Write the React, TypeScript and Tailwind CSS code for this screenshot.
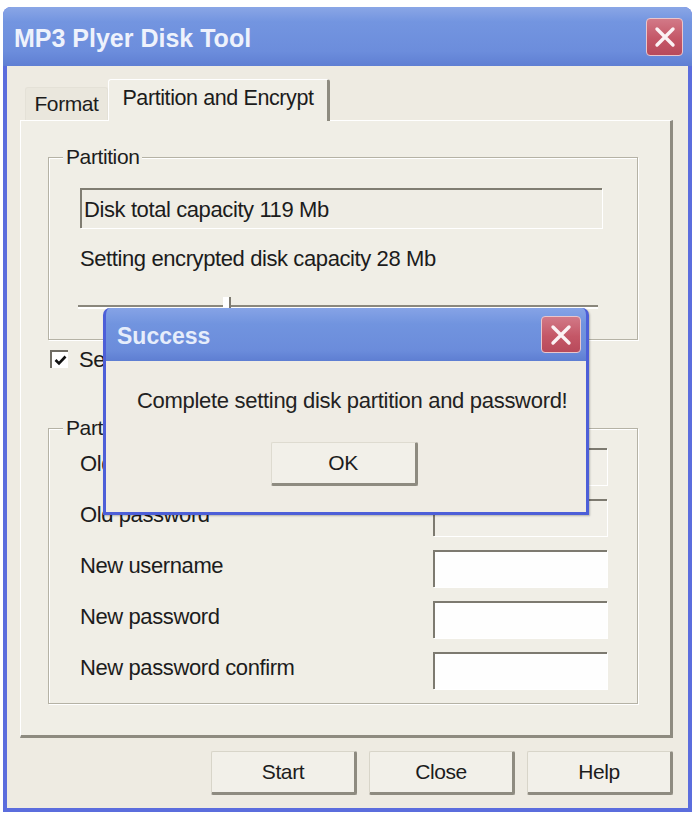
import React from "react";

const font = "font-['Liberation_Sans',Arial,sans-serif]";

const CloseBox = ({ className }: { className: string }) => (
  <div
    className={`flex items-center justify-center rounded-[4px] border border-[#e9c6cc] bg-[linear-gradient(180deg,#d27987_0%,#c45767_55%,#b84a5b_100%)] ${className}`}
  >
    <svg width="22" height="22" viewBox="0 0 22 22">
      <path d="M3 3 L19 19 M19 3 L3 19" stroke="#fbf2f4" strokeWidth="3.4" strokeLinecap="round" />
    </svg>
  </div>
);

const GroupBox = ({
  label,
  className,
  children,
}: {
  label: string;
  className: string;
  children: React.ReactNode;
}) => (
  <div
    className={`relative border border-[#b5b2a5] shadow-[inset_1px_1px_0_#ffffff,1px_1px_0_#ffffff] ${className}`}
  >
    <span className="absolute left-[14px] top-[-13px] bg-[#f0eee6] px-[3px] text-[21px] leading-[24px] text-[#1c1c1c]">
      {label}
    </span>
    {children}
  </div>
);

const InputBox = ({ disabled }: { disabled?: boolean }) => (
  <div
    className={`h-[37px] w-[174px] border-t-2 border-l-2 border-[#7d7a70] shadow-[1px_1px_0_#ffffff] ${
      disabled ? "bg-[#f1efe8]" : "bg-[#fefefe]"
    }`}
  />
);

const XpButton = ({ label }: { label: string }) => (
  <button className="flex h-[44px] w-[146px] items-center justify-center rounded-[2px] border border-[#d8d5c9] border-r-[3px] border-b-[3px] border-r-[#8e8b80] border-b-[#8e8b80] bg-[#f2f0e9] text-[21px] text-[#1c1c1c]">
    {label}
  </button>
);

const rows = [
  { label: "Old username", disabled: true },
  { label: "Old password", disabled: true },
  { label: "New username" },
  { label: "New password" },
  { label: "New password confirm" },
];

export default function App() {
  return (
    <div className={`h-[815px] w-[695px] bg-white pl-[3px] pt-[7px] tracking-[-0.4px] ${font}`}>
      <div className="relative flex h-[805px] w-[689px] flex-col overflow-hidden rounded-t-[8px] bg-[#5b6ddd]">
        {/* title bar */}
        <div className="flex h-[59px] items-center justify-between bg-[linear-gradient(180deg,#8aa6e6_0%,#7395e0_25%,#6c8ddc_75%,#5f7fd3_100%)] pl-[11px] pr-[9px]">
          <span className="pt-[4px] text-[25px] font-bold tracking-[0px] text-[#eef2fc]">
            MP3 Plyer Disk Tool
          </span>
          <CloseBox className="h-[38px] w-[37px]" />
        </div>

        {/* body */}
        <div className="mx-[4px] mb-[4px] flex flex-1 flex-col bg-[#eeebe2] pl-[13px] pt-[14px]">
          {/* tabs */}
          <div className="flex h-[40px] items-end">
            <div className="ml-[5px] flex h-[33px] w-[83px] items-center justify-center rounded-t-[3px] border border-b-0 border-[#e4e1d7] bg-[#eae7dd] text-[21px] text-[#1c1c1c]">
              Format
            </div>
            <div className="relative z-10 -mb-[1px] flex h-[42px] w-[222px] items-center justify-center rounded-t-[3px] border-l border-t border-white border-r-[3px] border-r-[#8e8b80] bg-[#f0eee6] pb-[4px] text-[21.5px] text-[#1c1c1c]">
              Partition and Encrypt
            </div>
          </div>

          {/* tab panel */}
          <div className="flex h-[618px] w-[653px] flex-col border-l border-t border-white border-r-[3px] border-b-[3px] border-r-[#8e8b80] border-b-[#8e8b80] bg-[#f0eee6] pl-[27px] pt-[36px]">
            <GroupBox label="Partition" className="h-[183px] w-[590px]">
              <div className="ml-[31px] mt-[30px] flex h-[40px] w-[522px] items-center border-t-2 border-l-2 border-[#807d72] bg-[#efede5] pl-[2px] text-[22px] text-[#1c1c1c] shadow-[1px_1px_0_#ffffff]">
                Disk total capacity 119 Mb
              </div>
              <div className="ml-[31px] mt-[19px] text-[22px] leading-[24px] text-[#1c1c1c]">
                Setting encrypted disk capacity 28 Mb
              </div>
              <div className="relative ml-[29px] mt-[34px] h-[4px] w-[520px] border-t-2 border-[#8a877c] bg-white">
                <div className="absolute left-[145px] top-[-10px] h-[11px] w-[8px] border-r-2 border-[#7d7a70] bg-white" />
              </div>
            </GroupBox>

            <div className="ml-[2px] mt-[9px] flex h-[20px] items-center gap-[11px]">
              <div className="flex h-[18px] w-[18px] items-center justify-center border-t-2 border-l-2 border-[#6f6c63] bg-white">
                <svg width="13" height="11" viewBox="0 0 13 11">
                  <path d="M1.5 5 L5 8.5 L11.5 1.5" stroke="#111" strokeWidth="2.6" fill="none" />
                </svg>
              </div>
              <span className="text-[22px] text-[#1c1c1c]">Set password</span>
            </div>

            <GroupBox label="Partition password" className="mt-[59px] h-[276px] w-[590px]">
              <div className="flex flex-col gap-[14px] pl-[31px] pt-[19px]">
                {rows.map((r) => (
                  <div key={r.label} className="flex h-[37px] items-center justify-between pr-[30px]">
                    <span className="-mt-[6px] text-[22px] text-[#1c1c1c]">{r.label}</span>
                    <InputBox disabled={r.disabled} />
                  </div>
                ))}
              </div>
            </GroupBox>
          </div>

          {/* buttons */}
          <div className="mt-[13px] flex w-[653px] justify-end gap-[12px]">
            <XpButton label="Start" />
            <XpButton label="Close" />
            <XpButton label="Help" />
          </div>
        </div>

        {/* Success dialog overlay */}
        <div className="absolute left-[100px] top-[301px] flex h-[207px] w-[486px] flex-col overflow-hidden rounded-t-[7px] border-x-[3px] border-b-[3px] border-[#4d5fd8] bg-[#4d5fd8] shadow-[1px_1px_2px_rgba(0,0,0,0.25)]">
          <div className="flex h-[53px] items-center justify-between bg-[linear-gradient(180deg,#86a3e6_0%,#7194df_30%,#6b8cdb_80%,#5e7ed2_100%)] pl-[11px] pr-[5px]">
            <span className="pt-[4px] text-[23px] font-bold tracking-[0px] text-[#e6edfb]">Success</span>
            <CloseBox className="h-[37px] w-[40px]" />
          </div>
          <div className="flex flex-1 flex-col bg-[#efece4]">
            <div className="mt-[27px] pl-[31px] text-[22px] leading-[26px] tracking-[-0.3px] text-[#222]">
              Complete setting disk partition and password!
            </div>
            <div className="mt-[28px] flex justify-center pr-[4px]">
              <button className="flex h-[44px] w-[147px] items-center justify-center rounded-[2px] border border-[#dedbd0] border-r-[3px] border-b-[3px] border-r-[#8e8b80] border-b-[#8e8b80] bg-[#f2f0e9] text-[21px] text-[#1c1c1c]">
                OK
              </button>
            </div>
          </div>
        </div>
      </div>
    </div>
  );
}
